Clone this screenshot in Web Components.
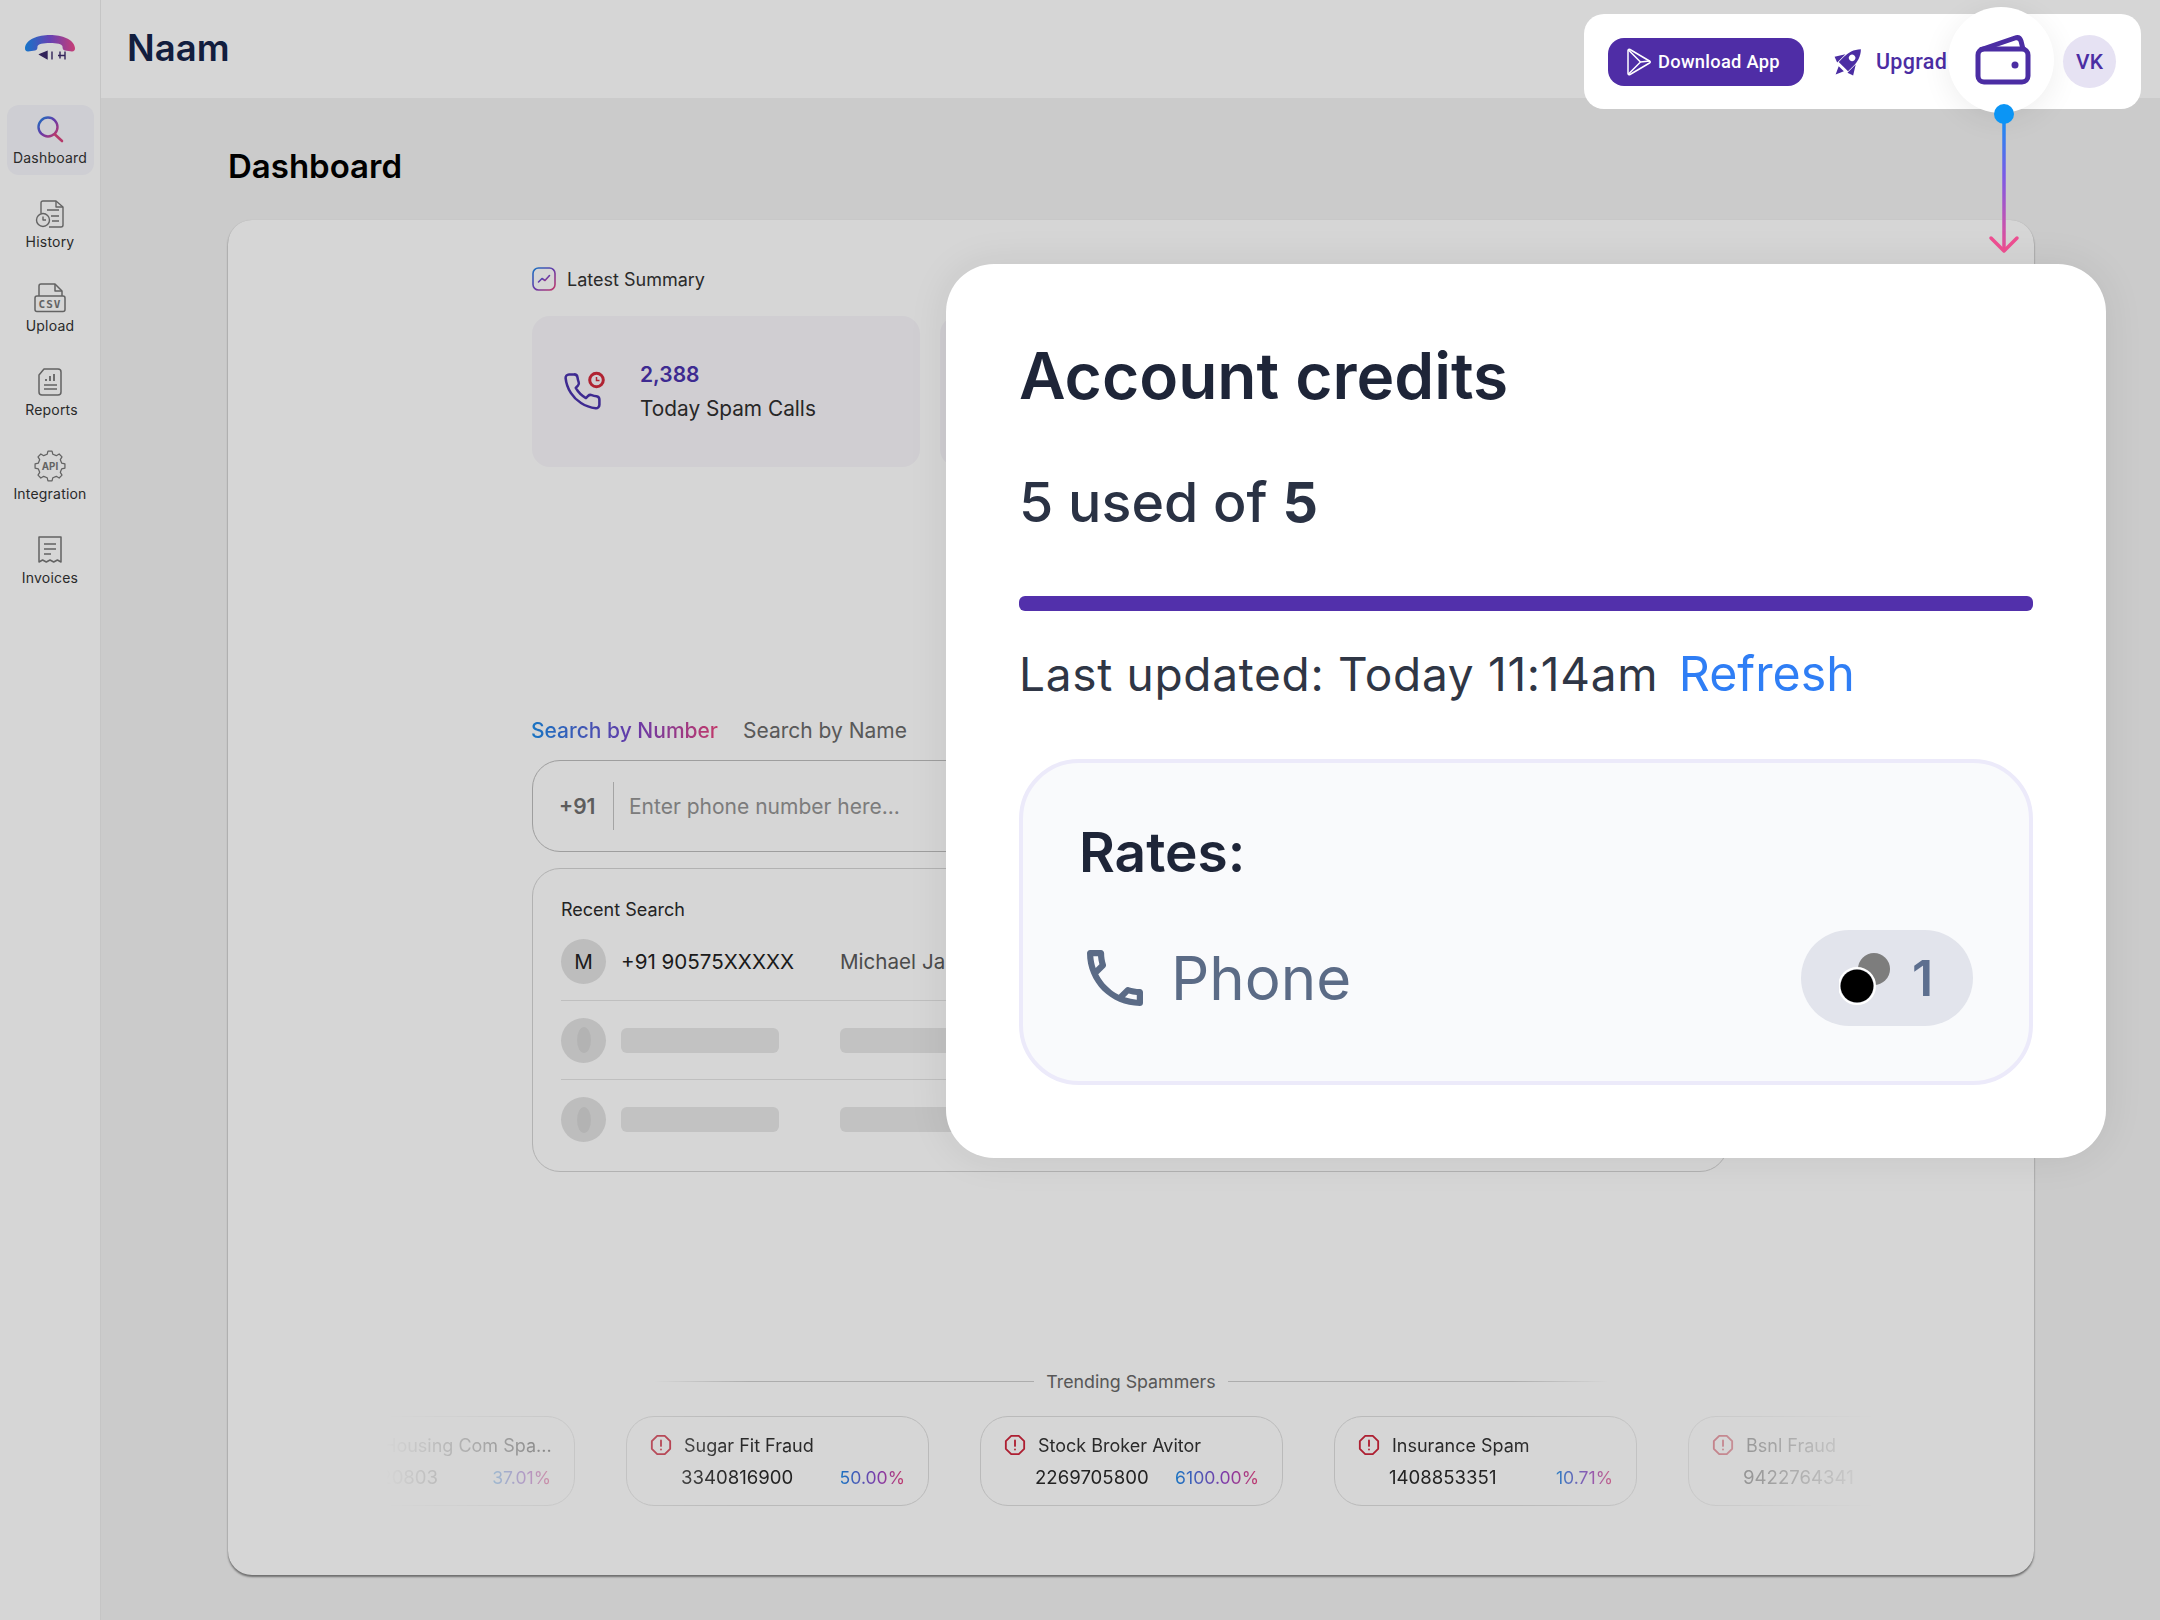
<!DOCTYPE html>
<html>
<head>
<meta charset="utf-8">
<title>Naam</title>
<style>
  html, body { margin: 0; padding: 0; }
  body {
    width: 2160px;
    height: 1620px;
    overflow: hidden;
    display: flex;
    font-family: Inter, "Noto Sans", sans-serif;
    color: #2a2a2a;
    background: #f2f2f2;
  }
</style>
</head>
<body>
  <dash-sidebar>
    <nav-item label="Dashboard" icon="search" active></nav-item>
    <nav-item label="History" icon="history"></nav-item>
    <nav-item label="Upload" icon="upload"></nav-item>
    <nav-item label="Reports" icon="reports" style="--shift:3px"></nav-item>
    <nav-item label="Integration" icon="api"></nav-item>
    <nav-item label="Invoices" icon="invoice"></nav-item>
  </dash-sidebar>

  <dash-main>
    <dash-card>
      <summary-row>
        <stat-card value="2,388" label="Today Spam Calls"></stat-card>
        <stat-card></stat-card>
      </summary-row>
      <search-panel>
        <recent-row avatar="M" phone="+91 90575XXXXX" name="Michael Ja"></recent-row>
        <recent-row></recent-row>
        <recent-row last></recent-row>
      </search-panel>
      <trending-row>
        <spammer-card name="Housing Com Spa..." count="2418920803" pct="37.01%" style="--inset:53px"></spammer-card>
        <spammer-card name="Sugar Fit Fraud" count="3340816900" pct="50.00%"></spammer-card>
        <spammer-card name="Stock Broker Avitor" count="2269705800" pct="6100.00%"></spammer-card>
        <spammer-card name="Insurance Spam" count="1408853351" pct="10.71%"></spammer-card>
        <spammer-card name="Bsnl Fraud" count="9422764341" pct="4.20%"></spammer-card>
      </trending-row>
    </dash-card>
  </dash-main>

  <dim-layer></dim-layer>
  <tour-bar></tour-bar>
  <tour-arrow></tour-arrow>
  <credits-modal></credits-modal>

<script>
const phonePath = "M22 16.92v3a2 2 0 0 1-2.18 2 19.79 19.79 0 0 1-8.63-3.07 19.5 19.5 0 0 1-6-6 19.79 19.79 0 0 1-3.07-8.67A2 2 0 0 1 4.11 2h3a2 2 0 0 1 2 1.72 12.84 12.84 0 0 0 .7 2.81 2 2 0 0 1-.45 2.11L8.09 9.91a16 16 0 0 0 6 6l1.27-1.27a2 2 0 0 1 2.11-.45 12.84 12.84 0 0 0 2.81.7A2 2 0 0 1 22 16.92z";
const callOutline = "M6.54 5c.06.89.21 1.76.45 2.59l-1.2 1.2c-.41-1.2-.67-2.47-.76-3.79h1.51m9.86 12.02c.85.24 1.72.39 2.6.45v1.49c-1.32-.09-2.59-.35-3.8-.75l1.2-1.19M7.5 3H4c-.55 0-1 .45-1 1 0 9.39 7.61 17 17 17 .55 0 1-.45 1-1v-3.49c0-.55-.45-1-1-1-1.24 0-2.45-.2-3.57-.57-.1-.04-.21-.05-.31-.05-.26 0-.51.1-.71.29l-2.2 2.2c-2.83-1.45-5.15-3.76-6.59-6.59l2.2-2.2c.28-.28.36-.67.25-1.02C8.7 6.45 8.5 5.25 8.5 4c0-.55-.45-1-1-1z";

function gearPath(cx, cy, outer, inner, teeth) {
  let d = "";
  const step = (Math.PI * 2) / teeth;
  for (let i = 0; i < teeth; i++) {
    const a = i * step;
    const pts = [
      [inner, a - step * 0.3],
      [outer, a - step * 0.17],
      [outer, a + step * 0.17],
      [inner, a + step * 0.3],
    ];
    pts.forEach(([r, t], j) => {
      d += (i === 0 && j === 0 ? "M" : "L") + (cx + r * Math.cos(t)).toFixed(1) + " " + (cy + r * Math.sin(t)).toFixed(1);
    });
  }
  return d + "Z";
}

const gradDefs = (id, x1 = 0, y1 = 0, x2 = 1, y2 = 0) => `
  <defs><linearGradient id="${id}" x1="${x1}" y1="${y1}" x2="${x2}" y2="${y2}">
    <stop offset="0" stop-color="#1d8be8"/><stop offset=".5" stop-color="#7a45c9"/><stop offset="1" stop-color="#e8447f"/>
  </linearGradient></defs>`;

const navIcons = {
  search: `<svg width="30" height="30" viewBox="0 0 30 30" fill="none">${gradDefs("s", 0, 0, 1, 1)}
      <circle cx="13" cy="12" r="9.5" stroke="url(#s)" stroke-width="2.4"/>
      <path d="M20 19.5l7 6.5" stroke="#d8447f" stroke-width="2.6" stroke-linecap="round"/></svg>`,
  history: `<svg width="30" height="28" viewBox="0 0 30 28" fill="none" stroke="#777" stroke-width="1.4" stroke-linejoin="round">
      <path d="M6 13V3q0-2 2-2h13l7 6v18q0 2-2 2H14"/><path d="M21 1v6h7"/>
      <path d="M12 10h12M16 16h8M17 21h7"/><circle cx="8" cy="20" r="6.5"/><path d="M8 16.5V20h3"/></svg>`,
  upload: `<svg width="32" height="30" viewBox="0 0 32 30" fill="none" stroke="#777" stroke-width="1.5" stroke-linejoin="round">
      <path d="M5 13V3q0-2 2-2h14l7 7v5"/><path d="M21 1v7h7"/>
      <rect x="1" y="13" width="30" height="15.500" rx="2"/>
      <text x="16" y="25" text-anchor="middle" font-family="'DejaVu Sans Mono',monospace" font-size="11" font-weight="700" fill="#777" stroke="none" letter-spacing="1">CSV</text></svg>`,
  reports: `<svg width="24" height="28" viewBox="0 0 24 28" fill="none" stroke="#777" stroke-width="1.5" stroke-linejoin="round">
      <path d="M6 1h14q3 0 3 3v20q0 3-3 3H4q-3 0-3-3V7z"/>
      <path d="M8 13v-2M12 13V8M16 13V6" stroke-width="1.800"/><path d="M6 17h13M6 21h13"/></svg>`,
  api: `<svg width="32" height="32" viewBox="0 0 36 36" fill="none">
      <path d="${gearPath(18, 18, 17, 13.6, 8)}" stroke="#777" stroke-width="1.400" stroke-linejoin="round"/>
      <text x="18" y="22" text-anchor="middle" font-family="Inter,sans-serif" font-size="11" font-weight="700" fill="#777">API</text></svg>`,
  invoice: `<svg width="24" height="28" viewBox="0 0 24 28" fill="none" stroke="#777" stroke-width="1.5" stroke-linejoin="round">
      <path d="M1 1h22v25l-3.600-2-3.700 2-3.700-2-3.700 2-3.700-2L1 26z"/><path d="M6 8h12M6 13h12M6 18h7"/></svg>`,
};

class DashSidebar extends HTMLElement {
  connectedCallback() {
    this.attachShadow({ mode: "open" }).innerHTML = `
      <style>
        :host {
          display: flex;
          flex-direction: column;
          align-items: center;
          flex: none;
          width: 100px;
          height: 1620px;
          background: #fff;
          border-right: 1px solid #ebebeb;
          box-sizing: content-box;
        }
        .logo { height: 105px; display: flex; align-items: flex-start; justify-content: center; padding-top: 33px; box-sizing: border-box; }
        .items { display: flex; flex-direction: column; gap: 14px; }
      </style>
      <div class="logo">
        <svg width="52" height="30" viewBox="0 0 52 30" fill="none">
          <defs><linearGradient id="lg" x1="0" y1="0" x2="1" y2="0">
            <stop offset="0" stop-color="#1a8cf0"/><stop offset=".5" stop-color="#7b4fd6"/><stop offset="1" stop-color="#ee4a8c"/>
          </linearGradient></defs>
          <path d="M1 15C2 6 14 2 26 2s24 4 25 13c.2 2-1 3.500-3 3.500l-7-1c-2-.3-2.500-2-2.500-4 0-2.500-6-3.500-12.500-3.500s-12.500 1-12.500 3.500c0 2-.5 3.700-2.500 4l-7 1c-2 0-3.200-1.500-3-3.500z" fill="url(#lg)"/>
          <path d="M16 21.500l7-3v7zM28 18.500v8M34 22.500h7M36 18.500v7M41 18.500v8" fill="#3b2a6a" stroke="#3b2a6a" stroke-width="1.400"/>
        </svg>
      </div>
      <div class="items"><slot></slot></div>`;
  }
}

class NavItem extends HTMLElement {
  connectedCallback() {
    const active = this.hasAttribute("active");
    this.attachShadow({ mode: "open" }).innerHTML = `
      <style>
        :host {
          display: flex;
          flex-direction: column;
          align-items: center;
          width: 87px;
          height: 70px;
          padding-top: 8px;
          box-sizing: border-box;
          border-radius: 12px;
          background: ${active ? "#f6f6fc" : "transparent"};
        }
        .ic { height: 34px; display: flex; align-items: center; justify-content: center; }
        .lb { font-size: 14px; line-height: 18px; margin-top: 2px; color: #333; letter-spacing: .2px; white-space: nowrap; padding-left: var(--shift, 0); }
      </style>
      <div class="ic">${navIcons[this.getAttribute("icon")]}</div>
      <div class="lb">${this.getAttribute("label")}</div>`;
  }
}

class DashMain extends HTMLElement {
  connectedCallback() {
    this.attachShadow({ mode: "open" }).innerHTML = `
      <style>
        :host { display: flex; flex-direction: column; flex: 1; min-width: 0; height: 1620px; }
        header {
          height: 98px;
          flex: none;
          background: #fff;
          display: flex;
          align-items: center;
          padding-left: 26px;
          padding-bottom: 2px;
          box-sizing: border-box;
          font-size: 36.500px;
          font-weight: 600;
          color: #16244a;
        }
        .body { padding: 0 126px 0 127px; }
        h1 { margin: 0; height: 122px; display: flex; align-items: center; padding-top: 14px; box-sizing: border-box; font-size: 33px; font-weight: 600; color: #000; }
      </style>
      <header>Naam</header>
      <div class="body">
        <h1>Dashboard</h1>
        <slot></slot>
      </div>`;
  }
}

class DashCard extends HTMLElement {
  connectedCallback() {
    this.attachShadow({ mode: "open" }).innerHTML = `
      <style>
        :host {
          display: block;
          height: 1355px;
          box-sizing: border-box;
          background: #fff;
          border-radius: 24px;
          box-shadow: 0 2px 2px rgba(0,0,0,.45), 0 0 1px rgba(0,0,0,.15);
          padding-top: 47px;
          overflow: hidden;
        }
      </style>
      <slot></slot>`;
  }
}

class SummaryRow extends HTMLElement {
  connectedCallback() {
    this.attachShadow({ mode: "open" }).innerHTML = `
      <style>
        :host { display: block; padding-left: 304px; }
        .head { display: flex; align-items: center; gap: 11px; height: 24px; font-size: 18px; color: #333; }
        .row { display: flex; gap: 20px; margin-top: 25px; }
      </style>
      <div class="head">
        <svg width="24" height="24" viewBox="0 0 24 24" fill="none">${gradDefs("c", 0, 0, 1, 1)}
          <rect x="1" y="1" width="22" height="22" rx="5.500" stroke="url(#c)" stroke-width="1.600"/>
          <path d="M6.500 15l3.500-3.500 3 2 4.500-5" stroke="url(#c)" stroke-width="1.600" stroke-linecap="round" stroke-linejoin="round"/>
        </svg>
        Latest Summary
      </div>
      <div class="row"><slot></slot></div>`;
  }
}

class StatCard extends HTMLElement {
  connectedCallback() {
    const value = this.getAttribute("value");
    this.attachShadow({ mode: "open" }).innerHTML = `
      <style>
        :host {
          display: flex;
          align-items: center;
          flex: none;
          width: 388px;
          height: 151px;
          box-sizing: border-box;
          padding-left: 31px;
          background: #f8f6fb;
          border-radius: 18px;
        }
        svg { flex: none; }
        .txt { margin-left: 33px; padding-top: 3px; }
        .v { font-size: 21px; line-height: 30px; font-weight: 600; color: #4a33ad; }
        .l { font-size: 20.800px; line-height: 37px; color: #2f2f2f; }
      </style>
      ${value ? `
      <svg width="44" height="44" viewBox="0 0 44 44" fill="none">
        <g transform="translate(-1 1) scale(1.700)"><path d="${phonePath}" stroke="#4a33ad" stroke-width="1.500" stroke-linejoin="round"/></g>
        <circle cx="33.500" cy="10" r="6.800" stroke="#d22a3c" stroke-width="3"/>
        <path d="M33.500 7v3.500h3" stroke="#d22a3c" stroke-width="1.500"/>
      </svg>
      <div class="txt"><div class="v">${value}</div><div class="l">${this.getAttribute("label")}</div></div>` : ""}`;
  }
}

class SearchPanel extends HTMLElement {
  connectedCallback() {
    this.attachShadow({ mode: "open" }).innerHTML = `
      <style>
        :host { display: block; width: 1196px; margin: 252px 0 0 304px; }
        .tabs { display: flex; gap: 25px; height: 24px; line-height: 24px; font-size: 21px; margin-left: -1px; }
        .on {
          font-weight: 500;
          background: linear-gradient(90deg, #1d8be8, #7a45c9 55%, #e8447f);
          -webkit-background-clip: text;
          background-clip: text;
          color: transparent;
        }
        .off { color: #6a6a6a; }
        .field {
          display: flex;
          align-items: center;
          height: 92px;
          margin-top: 17px;
          box-sizing: border-box;
          border: 1.5px solid #bdbdbd;
          border-radius: 28px;
          font-size: 21px;
        }
        .code { width: 80px; padding-left: 26px; box-sizing: border-box; font-weight: 600; color: #6f6f6f; }
        .field i { width: 1px; height: 48px; background: #c4c4c4; }
        .hint { margin-left: 15px; color: #949494; }
        .recent {
          height: 304px;
          margin-top: 16px;
          box-sizing: border-box;
          border: 1.5px solid #d4d4d4;
          border-radius: 28px;
          padding: 29px 28px 0;
        }
        .title { font-size: 18px; line-height: 24px; color: #2a2a2a; margin-bottom: 0; }
      </style>
      <div class="tabs"><span class="on">Search by Number</span><span class="off">Search by Name</span></div>
      <div class="field"><span class="code">+91</span><i></i><span class="hint">Enter phone number here...</span></div>
      <div class="recent"><div class="title">Recent Search</div><slot></slot></div>`;
  }
}

class RecentRow extends HTMLElement {
  connectedCallback() {
    const phone = this.getAttribute("phone");
    this.attachShadow({ mode: "open" }).innerHTML = `
      <style>
        :host {
          display: flex;
          align-items: center;
          height: 79px;
          box-sizing: border-box;
          border-bottom: ${this.hasAttribute("last") ? "0" : "1px solid #e4e4e4"};
          font-size: 20.600px;
        }
        .av {
          width: 45px; height: 45px; flex: none;
          margin-right: 15px;
          border-radius: 50%;
          background: #e2e2e2;
          display: flex; align-items: center; justify-content: center;
          color: #222;
        }
        .blob { width: 14px; height: 26px; border-radius: 50%; background: #d6d6d6; }
        .p { width: 219px; flex: none; color: #222; white-space: nowrap; }
        .n { color: #5a5a5a; white-space: nowrap; }
        .sk { height: 25px; width: 158px; border-radius: 6px; background: #e7e7e7; flex: none; }
        .gap { width: 61px; flex: none; }
        .sk2 { width: 300px; }
      </style>
      ${phone
        ? `<div class="av">${this.getAttribute("avatar")}</div><div class="p">${phone}</div><div class="n">${this.getAttribute("name")}</div>`
        : `<div class="av"><div class="blob"></div></div><div class="sk"></div><div class="gap"></div><div class="sk sk2"></div>`}`;
  }
}

class TrendingRow extends HTMLElement {
  connectedCallback() {
    this.attachShadow({ mode: "open" }).innerHTML = `
      <style>
        :host { display: block; margin-top: 197px; }
        .label {
          display: flex; align-items: center; justify-content: center; gap: 12px;
          height: 24px; font-size: 17.800px; color: #686868;
        }
        .label i { width: 380px; height: 1px; }
        .label i:first-child { background: linear-gradient(90deg, transparent, #cfcfcf 25%); }
        .label i:last-child { background: linear-gradient(270deg, transparent, #cfcfcf 25%); }
        .track {
          display: flex;
          justify-content: center;
          gap: 51px;
          width: 1490px;
          margin: 23px auto 0;
          padding-left: 1px;
          box-sizing: border-box;
          overflow: hidden;
          -webkit-mask-image: linear-gradient(90deg, transparent, #000 24%, #000 76%, transparent);
          mask-image: linear-gradient(90deg, transparent, #000 24%, #000 76%, transparent);
        }
      </style>
      <div class="label"><i></i>Trending Spammers<i></i></div>
      <div class="track"><slot></slot></div>`;
  }
}

class SpammerCard extends HTMLElement {
  connectedCallback() {
    this.attachShadow({ mode: "open" }).innerHTML = `
      <style>
        :host {
          display: block;
          flex: none;
          width: 303px;
          height: 90px;
          box-sizing: border-box;
          border: 1.5px solid #dedede;
          border-radius: 28px;
          padding: 16px 23px 0 23px;
          font-size: 18px;
        }
        .top { display: flex; align-items: center; height: 24px; }
        svg { flex: none; margin-right: 12px; }
        .name { color: #333; white-space: nowrap; margin-left: var(--inset, 0); }
        .bottom { display: flex; justify-content: space-between; align-items: baseline; margin: 8px 0 0 31px; line-height: 24px; }
        .count { color: #2a2a2a; font-size: 18.600px; }
        .pct {
          font-size: 17.600px;
          background: linear-gradient(90deg, #1d8be8, #9a45c9 60%, #e8447f);
          -webkit-background-clip: text;
          background-clip: text;
          color: transparent;
        }
      </style>
      <div class="top">
        <svg width="22" height="22" viewBox="0 0 24 24" fill="none" stroke="#d0263c" stroke-width="2" stroke-linecap="round" stroke-linejoin="round">
          <polygon points="7.860 2 16.140 2 22 7.860 22 16.140 16.140 22 7.860 22 2 16.140 2 7.860"/>
          <path d="M12 7v6M12 16.800v.2"/>
        </svg>
        <span class="name">${this.getAttribute("name")}</span>
      </div>
      <div class="bottom"><span class="count">${this.getAttribute("count")}</span><span class="pct">${this.getAttribute("pct")}</span></div>`;
  }
}

class DimLayer extends HTMLElement {
  connectedCallback() {
    this.attachShadow({ mode: "open" }).innerHTML = `
      <style>
        :host { position: absolute; inset: 0; display: block; background: rgba(0,0,0,.16); }
      </style>`;
  }
}

class TourBar extends HTMLElement {
  connectedCallback() {
    this.attachShadow({ mode: "open" }).innerHTML = `
      <style>
        :host {
          position: absolute;
          left: 1584px; top: 14px;
          width: 557px; height: 95px;
          box-sizing: border-box;
          padding-left: 24px;
          display: flex;
          align-items: center;
          background: #fff;
          border-radius: 20px;
          font-family: Roboto, sans-serif;
          font-weight: 500;
          color: #4b2da3;
        }
        .dl {
          display: flex; align-items: center;
          flex: none;
          width: 196px; height: 48px;
          box-sizing: border-box;
          padding-left: 18px;
          border-radius: 16px;
          background: #4f2da6;
          color: #fff;
          font-size: 18.300px;
          letter-spacing: .3px;
        }
        .dl svg { margin-right: 6px; }
        .rocket { flex: none; margin-left: 27px; margin-right: 10px; }
        .up { font-size: 21.500px; letter-spacing: .3px; }
        .spot {
          position: absolute;
          left: 364px; top: -7px;
          width: 106px; height: 106px;
          border-radius: 50%;
          background: #fff;
          box-shadow: 0 6px 30px rgba(0,0,0,.07);
          display: flex; align-items: center; justify-content: center;
        }
        .spot svg { margin-left: 3px; }
        .vk {
          position: absolute;
          left: 479px; top: 21px;
          width: 53px; height: 53px;
          border-radius: 50%;
          background: #e6e2f3;
          display: flex; align-items: center; justify-content: center;
          font-size: 21px;
        }
      </style>
      <div class="dl">
        <svg width="26" height="28" viewBox="0 0 26 28" fill="none" stroke="#fff" stroke-width="1.500" stroke-linejoin="round">
          <path d="M2 2.500c0-1 1-1.500 2-1l19.500 11.500c1 .6 1 1.500 0 2L4 26.500c-1 .5-2 0-2-1z"/>
          <path d="M2.500 2L14.500 14 2.500 26M14.500 14l9-1"/>
        </svg>
        Download App
      </div>
      <svg class="rocket" width="35" height="35" viewBox="0 0 24 24" fill="#4b2da3">
        <g transform="rotate(45 12 12)">
          <path d="M12 0C15.500 3.500 16.500 8 16.500 12v5h-9v-5C7.500 8 8.500 3.500 12 0z"/>
          <circle cx="12" cy="8.500" r="2.200" fill="#fff"/>
          <path d="M7 10l-4 6.500 4 1.500zM17 10l4 6.500-4 1.500zM9.500 19h5l-2.500 5.500z"/>
        </g>
      </svg>
      <span class="up">Upgrad</span>
      <div class="spot">
        <svg width="56" height="50" viewBox="0 0 56 50" fill="none" stroke="#4b2da3" stroke-width="5" stroke-linejoin="round">
          <rect x="3" y="14" width="50" height="33" rx="6"/>
          <path d="M5 15L40 3c3-1 5 0 6 3l2 8"/>
          <circle cx="40" cy="30" r="3.500" fill="#4b2da3" stroke="none"/>
        </svg>
      </div>
      <div class="vk">VK</div>`;
  }
}

class TourArrow extends HTMLElement {
  connectedCallback() {
    this.attachShadow({ mode: "open" }).innerHTML = `
      <style>
        :host { position: absolute; left: 1984px; top: 100px; display: block; width: 40px; height: 160px; }
      </style>
      <svg width="40" height="160" viewBox="0 0 40 160" fill="none">
        <defs><linearGradient id="ar" gradientUnits="userSpaceOnUse" x1="0" y1="14" x2="0" y2="152">
          <stop offset="0" stop-color="#0b95f5"/><stop offset=".45" stop-color="#7c5ae6"/><stop offset="1" stop-color="#ee4f92"/>
        </linearGradient></defs>
        <path d="M20 14V151" stroke="url(#ar)" stroke-width="3.500"/>
        <circle cx="20" cy="14" r="10" fill="#0b95f5"/>
        <path d="M7 138l13 13 13-13" stroke="#ee4f92" stroke-width="3.500" stroke-linecap="round" stroke-linejoin="round"/>
      </svg>`;
  }
}

class CreditsModal extends HTMLElement {
  connectedCallback() {
    this.attachShadow({ mode: "open" }).innerHTML = `
      <style>
        :host {
          position: absolute;
          left: 946px; top: 264px;
          width: 1160px; height: 894px;
          box-sizing: border-box;
          padding: 74px 73px 0 73px;
          background: #fff;
          border-radius: 48px;
          box-shadow: 0 0 40px rgba(0,0,0,.08);
          display: block;
          color: #1e2538;
        }
        h2 { margin: 0; font-size: 64px; line-height: 76px; font-weight: 600; white-space: nowrap; }
        .used { margin-top: 54px; font-size: 55.500px; line-height: 68px; font-weight: 500; color: #2a3244; }
        .used b { font-weight: 700; }
        .bar { margin-top: 60px; height: 15px; border-radius: 6px; background: #5230ab; }
        .upd { margin-top: 33px; font-size: 46px; line-height: 60px; color: #2f3645; letter-spacing: .7px; white-space: nowrap; }
        .upd span { color: #2f7ef5; margin-left: 7px; letter-spacing: 0; font-size: 48.300px; }
        .rates {
          margin-top: 55px;
          height: 326px;
          box-sizing: border-box;
          border: 4px solid #eceafa;
          border-radius: 60px;
          background: #f9fafc;
          padding: 57px 56px 0 56px;
        }
        h3 { margin: 0; font-size: 55px; line-height: 64px; font-weight: 600; }
        .row { display: flex; align-items: center; justify-content: space-between; margin-top: 46px; }
        .ph { display: flex; align-items: center; gap: 28px; padding-left: 8px; font-size: 60px; color: #5b6b86; }
        .pill {
          display: flex; align-items: center;
          width: 172px; height: 96px;
          box-sizing: border-box;
          padding-left: 38px;
          border-radius: 48px;
          background: #e2e4ec;
          font-size: 50px; font-weight: 600; color: #5d6f8f;
        }
        .pill svg { margin-right: 19px; }
      </style>
      <h2>Account credits</h2>
      <div class="used">5 used of <b>5</b></div>
      <div class="bar"></div>
      <div class="upd">Last updated: Today 11:14am <span>Refresh</span></div>
      <div class="rates">
        <h3>Rates:</h3>
        <div class="row">
          <div class="ph">
            <svg width="56" height="56" viewBox="3 3 18 18" fill="#5b6b86"><path d="${callOutline}"/></svg>
            Phone
          </div>
          <div class="pill">
            <svg width="54" height="54" viewBox="0 0 54 54">
              <circle cx="35" cy="18" r="16" fill="#7d7d7d"/>
              <circle cx="18" cy="35" r="18" fill="#e2e4ec"/>
              <circle cx="18" cy="35" r="18" fill="none" stroke="#fff" stroke-width="2"/>
              <circle cx="18" cy="35" r="16.500" fill="#000"/>
            </svg>
            1
          </div>
        </div>
      </div>`;
  }
}

customElements.define("dash-sidebar", DashSidebar);
customElements.define("nav-item", NavItem);
customElements.define("dash-main", DashMain);
customElements.define("dash-card", DashCard);
customElements.define("summary-row", SummaryRow);
customElements.define("stat-card", StatCard);
customElements.define("search-panel", SearchPanel);
customElements.define("recent-row", RecentRow);
customElements.define("trending-row", TrendingRow);
customElements.define("spammer-card", SpammerCard);
customElements.define("dim-layer", DimLayer);
customElements.define("tour-bar", TourBar);
customElements.define("tour-arrow", TourArrow);
customElements.define("credits-modal", CreditsModal);
</script>
</body>
</html>
